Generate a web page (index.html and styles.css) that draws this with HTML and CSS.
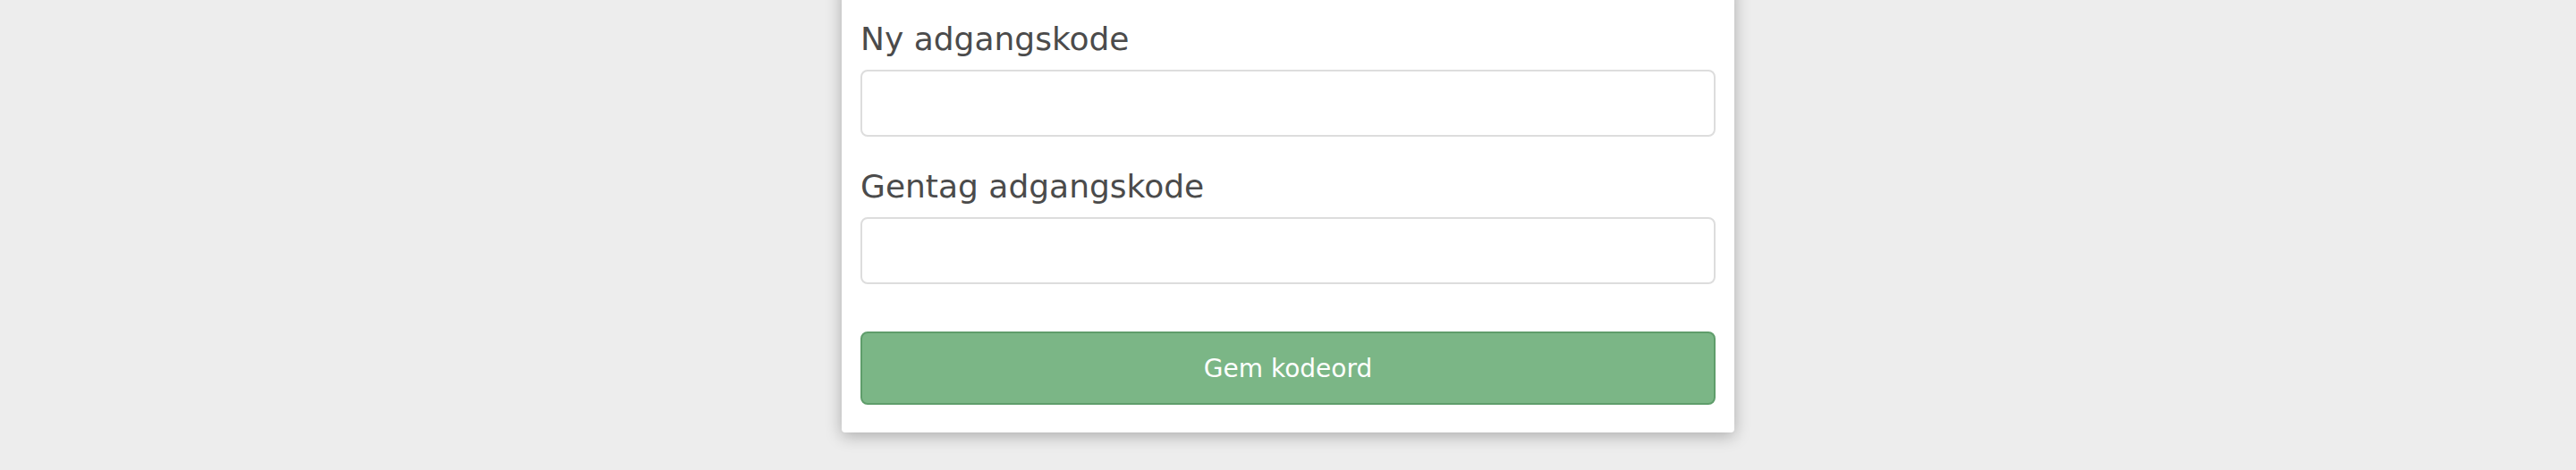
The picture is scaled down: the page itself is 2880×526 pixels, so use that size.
FILE: index.html
```html
<!DOCTYPE html>
<html lang="da">
<head>
<meta charset="utf-8">
<title>Nulstil adgangskode</title>
<link rel="stylesheet" href="styles.css">
</head>
<body>
<main class="page">
  <form class="card">
    <div class="field">
      <label class="label" for="pw1">Ny adgangskode</label>
      <input class="input" id="pw1" type="password">
    </div>
    <div class="field">
      <label class="label" for="pw2">Gentag adgangskode</label>
      <input class="input" id="pw2" type="password">
    </div>
    <button class="btn" type="button">Gem kodeord</button>
  </form>
</main>
</body>
</html>
```

FILE: styles.css
```css
html, body {
  margin: 0;
  padding: 0;
  background: #ededed;
  font-family: "DejaVu Sans", Verdana, sans-serif;
}

.page {
  display: flex;
  justify-content: center;
  min-height: 526px;
}

.card {
  box-sizing: border-box;
  width: 998px;
  margin-top: -20px;
  align-self: flex-start;
  background: #ffffff;
  border-radius: 4px;
  box-shadow: 0 4px 18px rgba(0, 0, 0, 0.28);
  padding: 43px 21px 31px 21px;
  display: flex;
  flex-direction: column;
}

.field {
  display: flex;
  flex-direction: column;
}

.field + .field {
  margin-top: 35px;
}

.label {
  font-size: 36px;
  line-height: 42px;
  color: #4b4b4b;
  margin-bottom: 13px;
}

.input {
  box-sizing: border-box;
  height: 75px;
  width: 100%;
  border: 2px solid #dddddd;
  border-radius: 8px;
  background: #ffffff;
  margin: 0;
  outline: none;
}

.btn {
  box-sizing: border-box;
  margin-top: 53px;
  height: 82px;
  width: 100%;
  background: #7bb686;
  border: 2px solid #5f9d6b;
  border-radius: 8px;
  color: #ffffff;
  font-family: "DejaVu Sans", Verdana, sans-serif;
  font-size: 28px;
  cursor: pointer;
}
```
